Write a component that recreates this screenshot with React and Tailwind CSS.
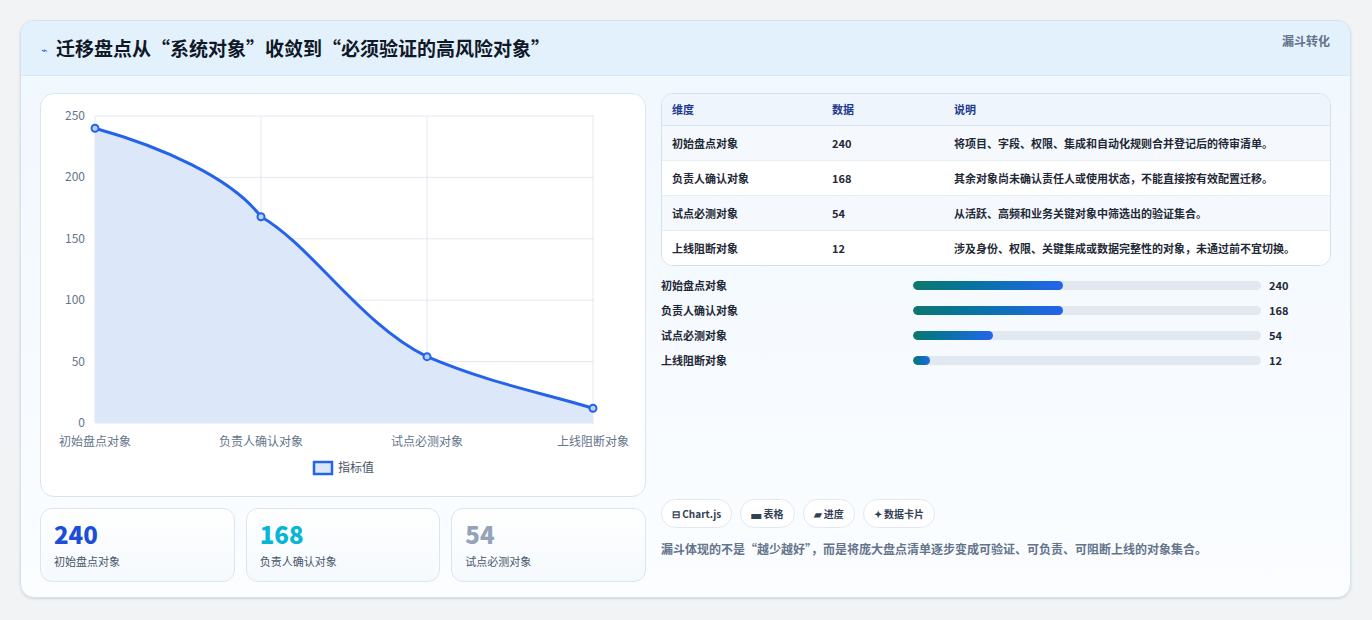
const rows = [
  { name: "初始盘点对象", value: 240, note: "将项目、字段、权限、集成和自动化规则合并登记后的待审清单。", bar: "43%" },
  { name: "负责人确认对象", value: 168, note: "其余对象尚未确认责任人或使用状态，不能直接按有效配置迁移。", bar: "43%" },
  { name: "试点必测对象", value: 54, note: "从活跃、高频和业务关键对象中筛选出的验证集合。", bar: "23%" },
  { name: "上线阻断对象", value: 12, note: "涉及身份、权限、关键集成或数据完整性的对象，未通过前不宜切换。", bar: "5%" },
];

const font = { fontFamily: '"Noto Sans CJK SC", "Noto Sans", sans-serif' };

const Chart = () => {
  const W = 606, H = 403;
  const x0 = 54, x1 = 553, y0 = 22, y1 = 329;
  const xs = [54, 220, 386, 552];
  const y = (v) => y1 - (v / 250) * (y1 - y0);
  const pts = rows.map((r, i) => [xs[i], y(r.value)]);
  const line = `M${pts[0][0]},${pts[0][1]} C120,${y(225)} 190,${y(200)} 220,${pts[1][1]} C270,${y(145)} 320,${y(80)} 386,${pts[2][1]} C450,${y(32)} 500,${y(25)} 552,${pts[3][1]}`;
  return (
    <svg width={W} height={H} className="block">
      {[0, 50, 100, 150, 200, 250].map((v) => (
        <g key={v}>
          <line x1={x0} x2={x1} y1={y(v)} y2={y(v)} stroke="#e2e8f0" />
          <text x={x0 - 10} y={y(v) + 4} textAnchor="end" fontSize="12" fill="#64748b">{v}</text>
        </g>
      ))}
      {xs.map((x, i) => (
        <g key={i}>
          <line x1={x} x2={x} y1={y0} y2={y1} stroke="#e2e8f0" />
          <text x={x} y={y1 + 23} textAnchor="middle" fontSize="12" fill="#64748b">{rows[i].name}</text>
        </g>
      ))}
      <path d={`${line} L552,${y1} L54,${y1} Z`} fill="#dde7fa" />
      <path d={line} fill="none" stroke="#2563eb" strokeWidth="3" />
      {pts.map(([px, py], i) => (
        <circle key={i} cx={px} cy={py} r="3.5" fill="#bcd0f7" stroke="#2563eb" strokeWidth="2" />
      ))}
      <rect x="273" y="368" width="18" height="12" fill="#dde7fa" stroke="#2563eb" strokeWidth="2.5" />
      <text x="297" y="378" fontSize="12" fill="#475569">指标值</text>
    </svg>
  );
};

export default function App() {
  return (
    <div className="w-[1372px] h-[620px] bg-[#f1f3f5] pt-[20px] pl-[20px]" style={font}>
      <div className="w-[1331px] h-[578px] rounded-[14px] border border-[#cfe3f3] bg-gradient-to-b from-[#f0f7fe] to-[#fbfdff] overflow-hidden shadow-sm">
        <div className="h-[55px] bg-[#e3f1fd] border-b border-[#d6e7f6] flex items-center justify-between px-[20px]">
          <div className="flex items-center gap-[8px]">
            <span className="text-[#2563eb] text-[11px] pt-[2px]">⌁</span>
            <h1 className="text-[19px] font-bold text-[#111827]">迁移盘点从“系统对象”收敛到“必须验证的高风险对象”</h1>
          </div>
          <span className="text-[12px] font-semibold text-[#64748b] -mt-[14px]">漏斗转化</span>
        </div>
        <div className="flex gap-[15px] px-[19px] pt-[17px]">
          <div className="w-[606px] flex flex-col gap-[11px]">
            <div className="h-[404px] rounded-[14px] border border-[#dbe5ef] bg-white overflow-hidden">
              <Chart />
            </div>
            <div className="grid grid-cols-3 gap-[11px]">
              {[["240", "text-[#1d4ed8]"], ["168", "text-[#06b6d4]"], ["54", "text-[#94a3b8]"]].map(([v, c], i) => (
                <div key={v} className="h-[74px] rounded-[12px] border border-[#dbe5ef] bg-gradient-to-b from-white to-[#f5f9fd] px-[13px] pt-[10px]">
                  <div className={`text-[24px] font-extrabold leading-[30px] ${c}`}>{v}</div>
                  <div className="text-[11px] text-[#475569] mt-[4px]">{rows[i].name}</div>
                </div>
              ))}
            </div>
          </div>
          <div className="w-[671px] flex flex-col">
            <div className="rounded-[12px] border border-[#d5e0eb] bg-white overflow-hidden">
              <div className="flex h-[32px] items-center bg-[#eef5fd] border-b border-[#dbe5ef] text-[11px] font-bold text-[#1e3a8a]">
                <div className="w-[170px] pl-[10px]">维度</div>
                <div className="w-[122px]">数据</div>
                <div className="flex-1">说明</div>
              </div>
              {rows.map((r, i) => (
                <div key={r.name} className={`flex py-[8px] text-[11px] font-semibold text-[#1f2937] leading-[18px] ${i % 2 === 0 ? "bg-[#f5f9fd]" : "bg-white"} ${i < 3 ? "border-b border-[#e5edf5]" : ""}`}>
                  <div className="w-[170px] pl-[10px]">{r.name}</div>
                  <div className="w-[122px]">{r.value}</div>
                  <div className="w-[352px]">{r.note}</div>
                </div>
              ))}
            </div>
            <div className="flex flex-col gap-[8px] mt-[11px]">
              {rows.map((r) => (
                <div key={r.name} className="flex items-center h-[17px] text-[11px] font-semibold text-[#1f2937]">
                  <div className="w-[252px]">{r.name}</div>
                  <div className="w-[348px] h-[9px] rounded-full bg-[#e2e8f0] overflow-hidden">
                    <div className="h-full rounded-full bg-gradient-to-r from-[#0f766e] to-[#2563eb]" style={{ width: r.bar }} />
                  </div>
                  <div className="ml-[8px] font-bold">{r.value}</div>
                </div>
              ))}
            </div>
            <div className="flex gap-[8px] mt-[130px]">
              {["⊟ Chart.js", "▄ 表格", "▰ 进度", "✦ 数据卡片"].map((t) => (
                <span key={t} className="h-[29px] px-[10px] flex items-center rounded-full border border-[#e2e8f0] bg-white text-[10px] font-bold text-[#334155]">{t}</span>
              ))}
            </div>
            <p className="mt-[12px] text-[12px] font-semibold text-[#64748b]">漏斗体现的不是“越少越好”，而是将庞大盘点清单逐步变成可验证、可负责、可阻断上线的对象集合。</p>
          </div>
        </div>
      </div>
    </div>
  );
}
